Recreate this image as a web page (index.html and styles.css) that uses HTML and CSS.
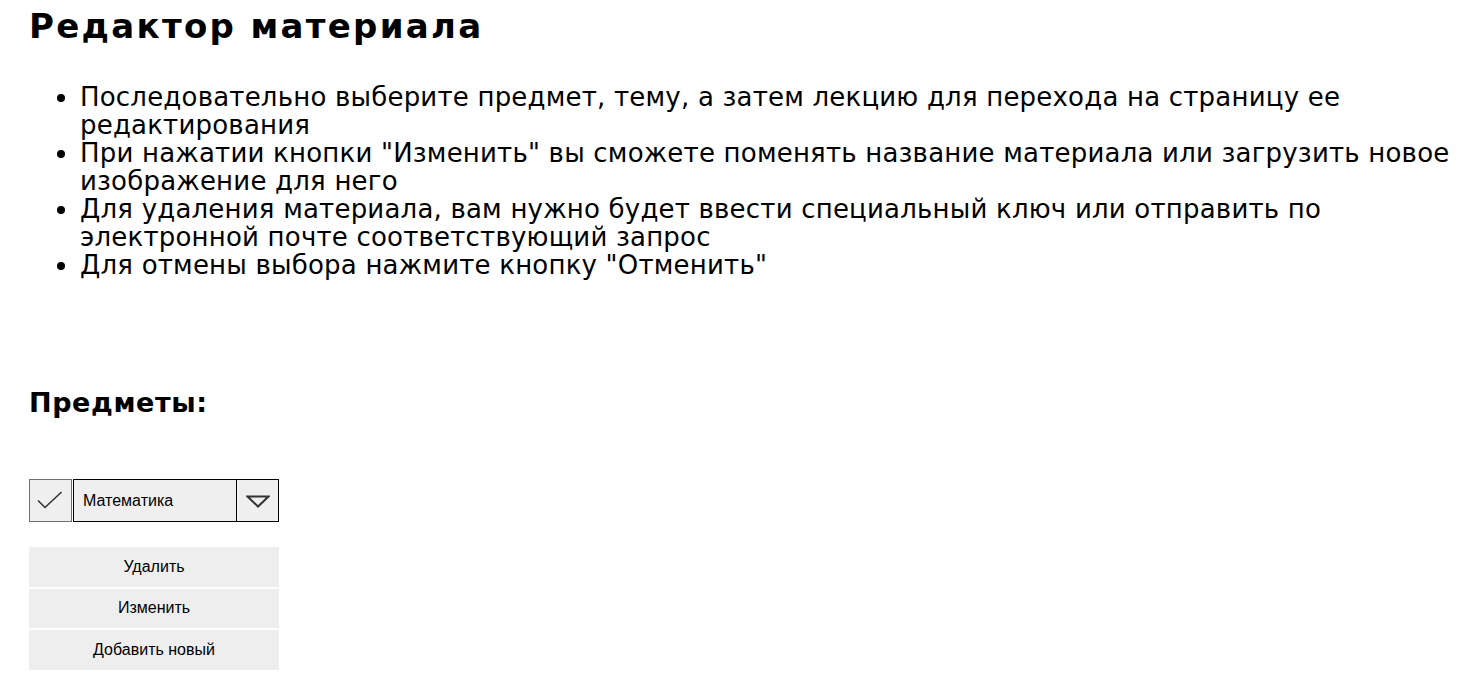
FILE: index.html
```html
<!DOCTYPE html>
<html lang="ru">
<head>
<meta charset="utf-8">
<title>Редактор материала</title>
<link rel="stylesheet" href="styles.css">
</head>
<body>
<div class="page">
  <h1 class="title">Редактор материала</h1>
  <ul class="rules">
    <li>Последовательно выберите предмет, тему, а затем лекцию для перехода на страницу ее редактирования</li>
    <li>При нажатии кнопки "Изменить" вы сможете поменять название материала или загрузить новое изображение для него</li>
    <li>Для удаления материала, вам нужно будет ввести специальный ключ или отправить по электронной почте соответствующий запрос</li>
    <li>Для отмены выбора нажмите кнопку "Отменить"</li>
  </ul>
  <h2 class="section">Предметы:</h2>
  <div class="picker">
    <div class="check">
      <svg width="26" height="20" viewBox="0 0 26 20"><path d="M1 9.5 L8 16.5 L24.5 1" fill="none" stroke="#333" stroke-width="1.6"/></svg>
    </div>
    <div class="select">
      <span class="value">Математика</span>
      <span class="arrow">
        <svg width="24" height="13" viewBox="0 0 24 13"><path d="M1.5 1.5 L22.5 1.5 L12 11.5 Z" fill="none" stroke="#333" stroke-width="2" stroke-linejoin="miter"/></svg>
      </span>
    </div>
  </div>
  <div class="actions">
    <button class="btn">Удалить</button>
    <button class="btn">Изменить</button>
    <button class="btn">Добавить новый</button>
  </div>
</div>
</body>
</html>
```

FILE: styles.css
```css
html, body {
  margin: 0;
  padding: 0;
  background: #fff;
  color: #000;
}
.page {
  padding: 6px 15px 0 29px;
  font-family: "DejaVu Sans", sans-serif;
}
.title {
  margin: 0;
  font-size: 34px;
  line-height: 40px;
  font-weight: bold;
  letter-spacing: 2.3px;
}
.rules {
  margin: 37px 0 0 0;
  padding-left: 51px;
  font-size: 26px;
  line-height: 28px;
  letter-spacing: 0.2px;
}
.section {
  margin: 108px 0 0 0;
  font-size: 27px;
  line-height: 32px;
  font-weight: bold;
  letter-spacing: 0.6px;
}
.picker {
  margin-top: 60px;
  display: flex;
  gap: 1px;
  width: 250px;
  height: 43px;
  font-family: "Liberation Sans", Arial, sans-serif;
  font-size: 16px;
}
.check {
  width: 41px;
  height: 41px;
  border: 1px solid #6e6e6e;
  background: #efefef;
  display: flex;
  align-items: center;
  justify-content: center;
}
.check svg {
  margin-top: 1px;
  margin-left: -1px;
}
.select {
  flex: 1;
  height: 41px;
  border: 1px solid #000;
  background: #efefef;
  display: flex;
  align-items: center;
}
.value {
  flex: 1;
  padding-left: 9px;
}
.arrow {
  width: 41px;
  height: 41px;
  border-left: 1px solid #000;
  display: flex;
  align-items: center;
  justify-content: center;
}
.arrow svg {
  margin-top: 2px;
}
.actions {
  margin-top: 25px;
  display: flex;
  flex-direction: column;
  gap: 2px;
  width: 250px;
}
.btn {
  height: 39.5px;
  border: none;
  background: #eeeeee;
  font-family: "Liberation Sans", Arial, sans-serif;
  font-size: 16px;
  color: #000;
  padding: 0;
  margin: 0;
}
```
